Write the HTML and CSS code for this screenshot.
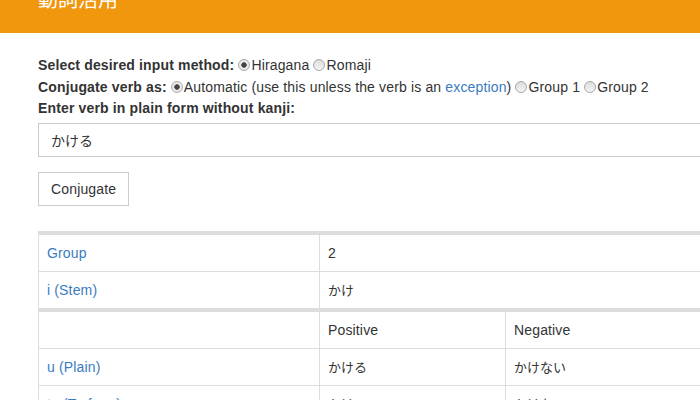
FILE: index.html
```html
<!DOCTYPE html>
<html lang="ja">
<head>
<meta charset="utf-8">
<title>動詞活用</title>
<link rel="stylesheet" href="styles.css">
</head>
<body>
<header class="topbar">
  <h1 class="title">動詞活用</h1>
</header>
<main class="content">
  <div class="opt-line first">
    <b>Select desired input method:</b>
    <label class="choice"><input class="radio" type="radio" name="method" checked>Hiragana</label>
    <label class="choice"><input class="radio" type="radio" name="method">Romaji</label>
  </div>
  <div class="opt-line second">
    <b>Conjugate verb as:</b>
    <label class="choice"><input class="radio" type="radio" name="group" checked>Automatic (use this unless the verb is an <a class="link" href="#">exception</a>)</label>
    <label class="choice"><input class="radio" type="radio" name="group">Group 1</label>
    <label class="choice"><input class="radio" type="radio" name="group">Group 2</label>
  </div>
  <div class="opt-line">
    <b>Enter verb in plain form without kanji:</b>
  </div>
  <input class="verb-input" type="text" value="かける">
  <button class="btn" type="button">Conjugate</button>

  <table class="table first-table">
    <tr>
      <td class="c1"><a class="link" href="#">Group</a></td>
      <td>2</td>
    </tr>
    <tr>
      <td class="c1"><a class="link" href="#">i (Stem)</a></td>
      <td class="jp">かけ</td>
    </tr>
  </table>
  <table class="table second-table">
    <tr>
      <td class="c1"></td>
      <td class="c2">Positive</td>
      <td>Negative</td>
    </tr>
    <tr>
      <td class="c1"><a class="link" href="#">u (Plain)</a></td>
      <td class="c2 jp">かける</td>
      <td class="jp">かけない</td>
    </tr>
    <tr>
      <td class="c1"><a class="link" href="#">te (Te-form)</a></td>
      <td class="c2 jp">かけて</td>
      <td class="jp">かけないで</td>
    </tr>
  </table>
</main>
</body>
</html>
```
FILE: styles.css
```css
html, body {
  overflow: hidden;
}
body {
  margin: 0;
  font-family: "Liberation Sans", Arial, "Noto Sans CJK JP", sans-serif;
  font-size: 14px;
  line-height: 20px;
  color: #333;
  background: #fff;
  letter-spacing: 0.15px;
}
.topbar {
  height: 33px;
  background: #f0970e;
  padding-left: 38px;
  overflow: hidden;
}
.title {
  margin: -11px 0 0;
  font-family: "Noto Sans CJK JP", sans-serif;
  font-size: 20px;
  line-height: 20px;
  font-weight: normal;
  color: #fff;
  letter-spacing: 0;
}
.content {
  width: 937px;
  padding-left: 38px;
}
.opt-line {
  height: 20px;
  line-height: 20px;
  white-space: nowrap;
}
.opt-line.first {
  margin-top: 20px;
  height: 24px;
  line-height: 24px;
}
.opt-line.second {
  height: 21px;
  line-height: 21px;
}
.choice {
  font-weight: normal;
}
.radio {
  -webkit-appearance: none;
  appearance: none;
  width: 12px;
  height: 12px;
  margin: 0 1px 0 0;
  border: 1px solid #a9a9a9;
  border-radius: 50%;
  background: linear-gradient(#dcdcdc, #f4f4f4);
  vertical-align: -1px;
  box-sizing: border-box;
}
.radio:checked {
  background: radial-gradient(circle, #444 0, #444 2.4px, #e6e6e6 3px, #f2f2f2 100%);
}
.link {
  color: #3a7bc0;
  text-decoration: none;
}
.verb-input {
  display: block;
  box-sizing: border-box;
  width: 100%;
  height: 34px;
  margin-top: 5px;
  padding: 6px 12px;
  border: 1px solid #ccc;
  border-radius: 0;
  font-family: "Liberation Sans", "Noto Sans CJK JP", sans-serif;
  font-size: 14px;
  color: #333;
  outline: none;
}
.btn {
  display: block;
  box-sizing: border-box;
  height: 34px;
  margin-top: 15px;
  padding: 6px 12px;
  border: 1px solid #ccc;
  border-radius: 0;
  background: #fff;
  font-family: "Liberation Sans", Arial, sans-serif;
  font-size: 14px;
  line-height: 20px;
  color: #333;
  letter-spacing: 0.15px;
}
.table {
  width: 937px;
  border-collapse: separate;
  border-spacing: 0;
  border-top: 4px solid #ddd;
  border-left: 1px solid #ddd;
  table-layout: fixed;
}
.first-table {
  margin-top: 25px;
}
.second-table {
  border-top-width: 3px;
}
.table td {
  box-sizing: border-box;
  padding: 8px;
  line-height: 20px;
  border-right: 1px solid #ddd;
  border-bottom: 1px solid #ddd;
  vertical-align: top;
  white-space: nowrap;
}
.table td.c1 {
  width: 281px;
}
.table td.c2 {
  width: 186px;
}
.jp {
  font-family: "Noto Sans CJK JP", sans-serif;
  font-size: 13px;
  letter-spacing: 0;
}
```
